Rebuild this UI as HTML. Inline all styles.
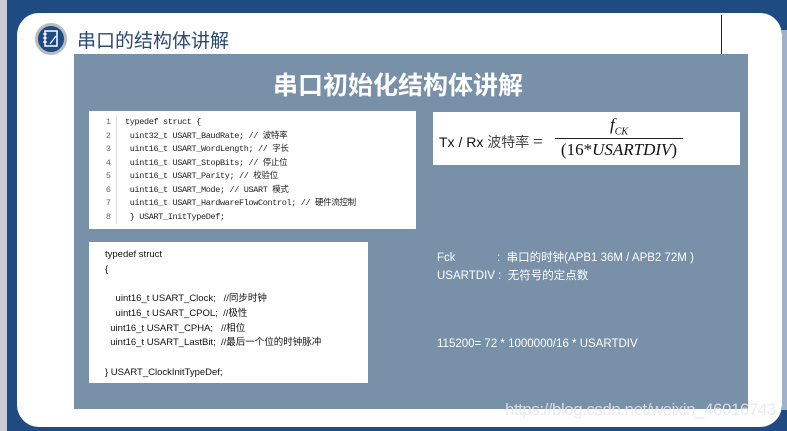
<!DOCTYPE html>
<html><head><meta charset="utf-8"><style>
*{margin:0;padding:0;box-sizing:border-box}
body{width:787px;height:431px;overflow:hidden;background:#1d4b82;position:relative;font-family:"Liberation Sans","Noto Sans CJK SC",sans-serif}
.edge{position:absolute;left:0;top:0;width:7px;height:431px;background:#c8ccd2}
.card{position:absolute;left:17px;top:13px;width:765px;height:414px;background:#fff;border-radius:22px}
.rstrip{position:absolute;right:0;top:30px;width:5px;height:380px;background:#9fb1c8}
.icon{position:absolute;left:35px;top:23px;width:32px;height:32px;border-radius:50%;background:#1e4b80;border:3px solid #b8bcc2}
.h{position:absolute;left:77px;top:26px;font-size:19px;color:#2a4a70}
.vl{position:absolute;left:721px;top:15px;width:1px;height:48px;background:#223}
.panel{position:absolute;left:74px;top:54px;width:674px;height:355px;background:#7890a8}
.t{position:absolute;left:270px;top:66px;width:256px;text-align:center;color:#fff;font-weight:bold;font-size:25px;white-space:nowrap}
.box{position:absolute;background:#fff}
.code{font-family:"Liberation Mono","Noto Sans CJK SC",monospace;font-size:8.5px;color:#222;line-height:13.5px}
.ln{position:absolute;left:10px;top:5px;width:18px;text-align:right;color:#666;border-right:1px solid #ddd;padding-right:5px}
.c2{font-size:9.5px;color:#111;line-height:14.7px;position:absolute;left:16px;top:6px;white-space:pre}
.w{position:absolute;color:#fff;font-size:11.5px;white-space:pre}
.wm{position:absolute;left:505px;top:400px;color:rgba(230,230,230,.85);font-size:17px;letter-spacing:-.5px}
</style></head><body>
<div class="edge"></div>
<div class="card"></div>
<div class="rstrip"></div>
<div class="icon"><svg width="26" height="26" viewBox="0 0 26 26" style="position:absolute;left:0;top:0"><rect x="7" y="5" width="12" height="15" fill="none" stroke="#fff" stroke-width="1.5"/><path d="M5 8h4M5 12h4M5 16h4M12 18l6-8" stroke="#fff" stroke-width="1.2"/></svg></div>
<div class="h">串口的结构体讲解</div>
<div class="vl"></div>
<div class="panel"></div>
<div class="t">串口初始化结构体讲解</div>
<div class="box code" style="left:89px;top:111px;width:327px;height:118px">
<div class="ln">1<br>2<br>3<br>4<br>5<br>6<br>7<br>8</div>
<div style="position:absolute;left:36px;top:5px;white-space:pre;letter-spacing:-0.35px">typedef struct {
 uint32_t USART_BaudRate; // 波特率
 uint16_t USART_WordLength; // 字长
 uint16_t USART_StopBits; // 停止位
 uint16_t USART_Parity; // 校验位
 uint16_t USART_Mode; // USART 模式
 uint16_t USART_HardwareFlowControl; // 硬件流控制
 } USART_InitTypeDef;</div>
</div>
<div class="box" style="left:433px;top:112px;width:307px;height:53px">
<div style="position:absolute;left:6px;top:20px;font-size:14px;color:#111">Tx / Rx <span style="color:#444">波特率</span> <span style="font-family:'Liberation Serif',serif;font-size:17px">=</span></div>
<div style="position:absolute;left:122px;top:3px;width:128px;text-align:center;font-family:'Liberation Serif',serif;font-style:italic;font-size:17px;color:#111">f<sub style="font-size:10px">CK</sub></div>
<div style="position:absolute;left:122px;top:26px;width:128px;height:1px;background:#222"></div>
<div style="position:absolute;left:122px;top:28px;width:128px;text-align:center;font-family:'Liberation Serif',serif;font-size:17px;color:#111">(16*<i>USARTDIV</i>)</div>
</div>
<div class="box" style="left:89px;top:242px;width:279px;height:141px">
<div class="c2">typedef struct
{

    uint16_t USART_Clock;   //同步时钟
    uint16_t USART_CPOL;  //极性
  uint16_t USART_CPHA;   //相位
  uint16_t USART_LastBit;  //最后一个位的时钟脉冲

} USART_ClockInitTypeDef;</div>
</div>
<div class="w" style="left:437px;top:249px">Fck             :  串口的时钟(APB1 36M / APB2 72M )</div>
<div class="w" style="left:437px;top:267px">USARTDIV :  无符号的定点数</div>
<div class="w" style="left:437px;top:338px">115200= 72 * 1000000/16 * USARTDIV</div>
<div class="wm">https://blog.csdn.net/weixin_46016743</div>
</body></html>
